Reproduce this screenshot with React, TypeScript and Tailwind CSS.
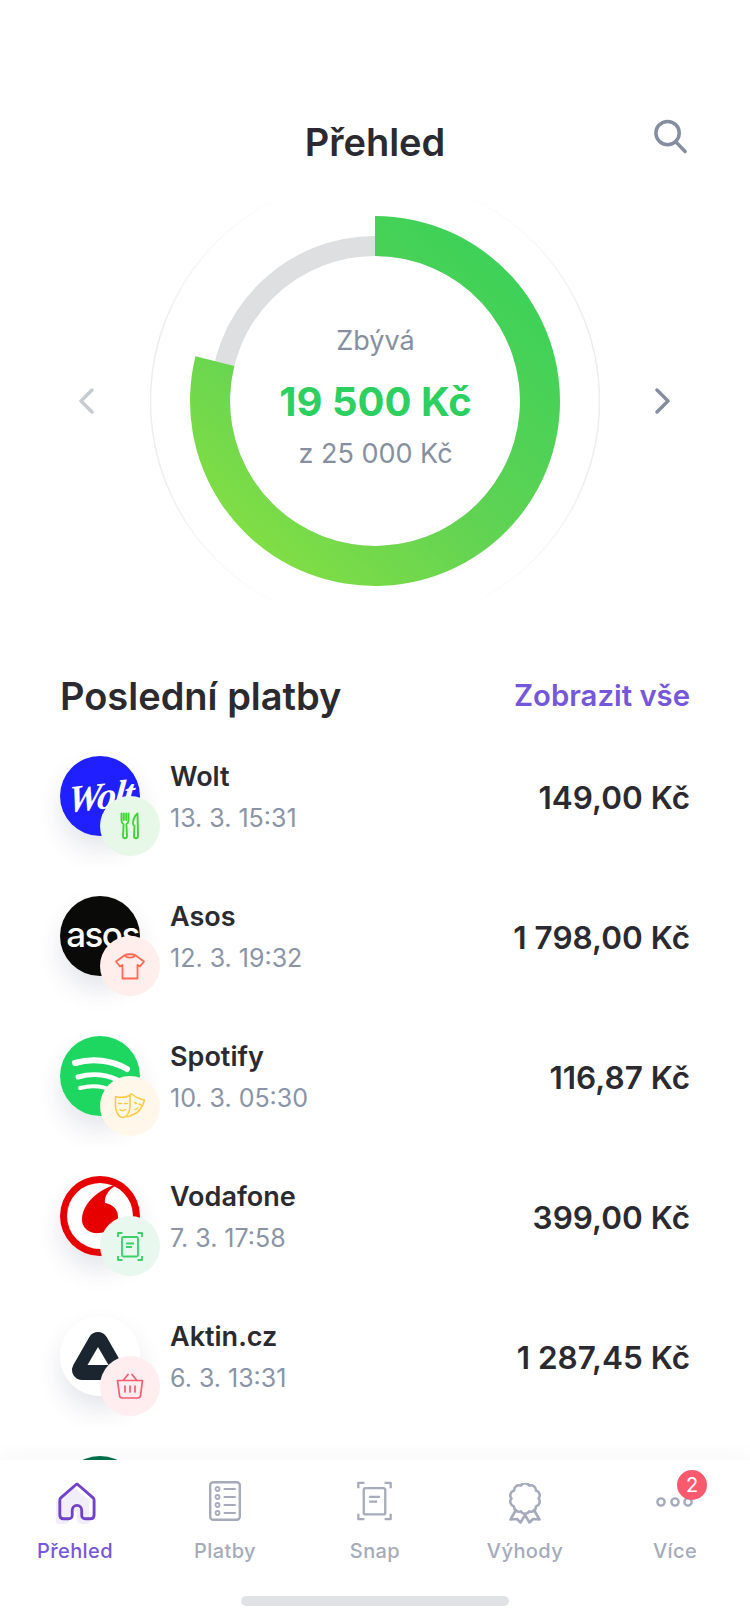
import React from 'react';

const polar = (r: number, deg: number) => {
  const a = ((deg - 90) * Math.PI) / 180;
  return `${225 + r * Math.cos(a)} ${225 + r * Math.sin(a)}`;
};

const scallop = (cx: number, cy: number, r: number, n: number) => {
  let d = '';
  for (let i = 0; i <= n; i++) {
    const a = (i * 2 * Math.PI) / n;
    const x = (cx + r * Math.cos(a)).toFixed(2);
    const y = (cy + r * Math.sin(a)).toFixed(2);
    d += i === 0 ? `M${x} ${y}` : ` A${r * 0.36} ${r * 0.36} 0 0 1 ${x} ${y}`;
  }
  return d + 'Z';
};

const Ring = () => (
  <svg width="450" height="450" viewBox="0 0 450 450" fill="none">
    <defs>
      <linearGradient id="ringGreen" x1="340" y1="90" x2="90" y2="380" gradientUnits="userSpaceOnUse">
        <stop offset="0" stopColor="#3FD158" />
        <stop offset="0.55" stopColor="#62D353" />
        <stop offset="1" stopColor="#84DF43" />
      </linearGradient>
      <linearGradient id="ringFade" x1="0" y1="0" x2="0" y2="450" gradientUnits="userSpaceOnUse">
        <stop offset="0.02" stopColor="#ECEDEF" stopOpacity="0" />
        <stop offset="0.35" stopColor="#ECEDEF" />
        <stop offset="0.65" stopColor="#ECEDEF" />
        <stop offset="0.98" stopColor="#ECEDEF" stopOpacity="0" />
      </linearGradient>
    </defs>
    <circle cx="225" cy="225" r="224.5" stroke="url(#ringFade)" strokeWidth="1.5" />
    <circle cx="225" cy="225" r="155" stroke="#DDDFE1" strokeWidth="20" />
    <path
      d={`M${polar(185, 0)} A185 185 0 1 1 ${polar(185, 284)} L${polar(145, 284)} A145 145 0 1 0 ${polar(145, 0)}Z`}
      fill="url(#ringGreen)"
    />
  </svg>
);

const Fork = () => (
  <svg width="20" height="28" viewBox="0 0 20 28" fill="none" stroke="#3FD43A" strokeWidth="1.9" strokeLinejoin="round" strokeLinecap="round">
    <path d="M1.5 1.5V8.5C1.5 10.5 2.5 11.5 3.6 12.3L3 24C3 27 7 27 7 24L6.4 12.3C7.5 11.5 8.5 10.5 8.5 8.5V1.5M3.8 1.5V8M6.2 1.5V8" />
    <path d="M17.5 1.5C14.5 4 13 8 13 11.5C13 12.8 13.8 13.5 14.5 14L14 24C14 27 18 27 18 24L17.5 1.5Z" />
  </svg>
);

const Shirt = () => (
  <svg width="32" height="27" viewBox="0 0 32 27" fill="none" stroke="#FF6A55" strokeWidth="1.8" strokeLinejoin="round">
    <path d="M11 2L2 8.5L6 13.5L8.5 12V25.5H23.5V12L26 13.5L30 8.5L21 2C20 5.5 12 5.5 11 2Z" />
    <path d="M11 2C12.5 1 19.5 1 21 2" />
  </svg>
);

const Masks = () => (
  <svg width="32" height="26" viewBox="0 0 32 26" fill="none" stroke="#FFCB47" strokeWidth="1.6" strokeLinecap="round" strokeLinejoin="round">
    <path d="M1.5 3.5C6 4.8 11 4.8 16 2.5V13C16 19 13 24 9 24.5C5 24.5 1.5 19 1.5 13V3.5Z" />
    <path d="M16 3C15.5 1 17.5 0.5 18.5 1.5C21 4 26 6 30.5 7C29 13 25 20 19 21.5C17.500 22.500 15.500 23.500 13.500 23.700" />
    <path d="M4.500 10.500H7.500M10.500 10.500H13.500M6 16.500C7.500 18 10 18 11.500 16.500M20.500 9.500L22.500 10.500M25 11L27 12M21 16.500C22.500 16.500 23.500 15.500 24 14.500" />
  </svg>
);

const SnapIcon = ({ color, w, h, sw }: { color: string; w: number; h: number; sw: number }) => (
  <svg width={w} height={h} viewBox="0 0 26 29" fill="none" stroke={color} strokeWidth={sw} strokeLinejoin="round">
    <path d="M5.500 1H1V5M20.500 1H25V5M1 24V28H5.500M25 24V28H20.500" />
    <rect x="5" y="5" width="16" height="19.500" rx="1.500" />
    <path d="M9 11.500H17M9 15H15" />
  </svg>
);

const Basket = () => (
  <svg width="28" height="26" viewBox="0 0 28 26" fill="none" stroke="#FA5B6E" strokeWidth="1.7" strokeLinecap="round" strokeLinejoin="round">
    <path d="M1.500 7.500H26.500L24.500 22.500C24.300 24 23.200 25 21.800 25H6.200C4.800 25 3.700 24 3.500 22.500L1.500 7.500Z" />
    <path d="M7.500 7L12 1.500M20.500 7L16 1.500M9 13V19M14 13V19M19 13V19" />
  </svg>
);

const WoltLogo = () => (
  <div className="w-20 h-20 rounded-full bg-[#1F1FFF] flex items-center justify-center overflow-hidden">
    <span className="text-white italic font-bold text-[38px] -rotate-6 -skew-x-12 tracking-[-1.5px] pl-[2px]" style={{ fontFamily: '"Liberation Serif", serif' }}>
      Wolt
    </span>
  </div>
);

const AsosLogo = () => (
  <div className="w-20 h-20 rounded-full bg-[#0A0A08] flex items-center justify-center overflow-hidden">
    <span className="text-white font-medium text-[35px] tracking-[-1.5px] mt-[-4px] pl-[5px]">asos</span>
  </div>
);

const SpotifyLogo = () => (
  <svg width="80" height="80" viewBox="0 0 80 80" className="block">
    <circle cx="40" cy="40" r="40" fill="#1ED760" />
    <g fill="none" stroke="#fff" strokeLinecap="round">
      <path d="M15 27C32 22 52 24 67 33" strokeWidth="6" />
      <path d="M18 41C32 37 48 38 61 46" strokeWidth="5" />
      <path d="M20 52C32 49 44 50 55 56" strokeWidth="4" />
    </g>
  </svg>
);

const VodafoneLogo = () => (
  <svg width="80" height="80" viewBox="0 0 80 80" className="block">
    <circle cx="40" cy="40" r="40" fill="#E60000" />
    <circle cx="40" cy="40" r="33" fill="#fff" />
    <path d="M58 8C42 12 24 24 22 42C21 53 31 58 39 57C50 56 58 50 58 41C58 32 51 28 45 27C44 20 49 13 58 8Z" fill="#E60000" />
  </svg>
);

const AktinLogo = () => (
  <svg width="80" height="80" viewBox="0 0 80 80" className="block">
    <circle cx="40" cy="40" r="40" fill="#fff" />
    <path d="M38 26L22 54H54Z" fill="#1B2530" stroke="#1B2530" strokeWidth="20" strokeLinejoin="round" />
    <path d="M38 31L27.500 49H48.500Z" fill="#fff" />
  </svg>
);

const payments = [
  { name: 'Wolt', date: '13. 3. 15:31', amount: '149,00 Kč', logo: <WoltLogo />, bg: 'bg-[#E8F8E8]', icon: <Fork /> },
  { name: 'Asos', date: '12. 3. 19:32', amount: '1 798,00 Kč', logo: <AsosLogo />, bg: 'bg-[#FFEEEB]', icon: <Shirt /> },
  { name: 'Spotify', date: '10. 3. 05:30', amount: '116,87 Kč', logo: <SpotifyLogo />, bg: 'bg-[#FFF8EA]', icon: <Masks /> },
  { name: 'Vodafone', date: '7. 3. 17:58', amount: '399,00 Kč', logo: <VodafoneLogo />, bg: 'bg-[#E8F8EE]', icon: <SnapIcon color="#3DD068" w={26} h={29} sw={1.900} /> },
  { name: 'Aktin.cz', date: '6. 3. 13:31', amount: '1 287,45 Kč', logo: <AktinLogo />, bg: 'bg-[#FFEDEF]', icon: <Basket /> },
];

const PaymentRow = ({ p }: { p: (typeof payments)[number] }) => (
  <div className="flex items-start h-[140px]">
    <div className="relative w-20 h-20 shrink-0 rounded-full shadow-[0_14px_26px_rgba(40,50,100,0.12)]">
      {p.logo}
      <div className={`absolute left-10 top-10 w-[60px] h-[60px] rounded-full flex items-center justify-center ${p.bg}`}>
        {p.icon}
      </div>
    </div>
    <div className="ml-[30px] h-20 pt-[2px] flex flex-col justify-center gap-[10px]">
      <div className="text-[27px] leading-[32px] font-semibold text-[#2A2A30]">{p.name}</div>
      <div className="text-[25px] leading-[30px] text-[#8A94A6]">{p.date}</div>
    </div>
    <div className="ml-auto h-20 pt-[3px] flex items-center text-[31.500px] font-semibold text-[#2A2A30]">{p.amount}</div>
  </div>
);

const tabGray = '#A5ABBA';

const HomeIcon = () => (
  <svg width="40" height="44" viewBox="0 0 42 46" fill="none">
    <path d="M0 21L18 5L35 19V41A3 3 0 0 1 32 44H27A5 5 0 0 1 22 39V34A4 4 0 0 0 14 34V39A5 5 0 0 1 9 44H3A3 3 0 0 1 0 41Z" fill="#F1EEFA" />
    <path d="M5 16.500L20.500 3C21.500 2 22.500 2 23.500 3L39 16.500C39.800 17.200 40 18 40 19V34.500C40 37 38.500 38.500 36 38.500H30.500C28.500 38.500 27 37 27 35V30C27 27 25 24.500 22 24.500C19 24.500 17 27 17 30V35C17 37 15.500 38.500 13.500 38.500H8C5.500 38.500 4 37 4 34.500V19C4 18 4.200 17.200 5 16.500Z" stroke="#7142C9" strokeWidth="3" strokeLinejoin="round" />
  </svg>
);

const ListIcon = () => (
  <svg width="32" height="40" viewBox="0 0 32 40" fill="none" stroke={tabGray} strokeWidth="2.400" strokeLinecap="round">
    <rect x="1.200" y="1.200" width="29.600" height="37.600" rx="3" />
    <circle cx="8.500" cy="8" r="2" strokeWidth="1.800" />
    <circle cx="8.500" cy="16" r="2" strokeWidth="1.800" />
    <circle cx="8.500" cy="24" r="2" strokeWidth="1.800" />
    <circle cx="8.500" cy="32" r="2" strokeWidth="1.800" />
    <path d="M15.500 8H26M15.500 16H26M15.500 24H26M15.500 32H26" strokeWidth="2" />
  </svg>
);

const AwardIcon = () => (
  <svg width="34" height="41" viewBox="0 0 34 41" fill="none" stroke={tabGray} strokeWidth="2.600" strokeLinejoin="round" strokeLinecap="round">
    <path d={scallop(17, 15.500, 13.500, 10)} />
    <path d="M8 27L2.500 36.500L9 36L12.500 39.500L17 32L21.500 39.500L25 36L31.500 36.500L26 27" />
  </svg>
);

const DotsIcon = () => (
  <svg width="44" height="12" viewBox="0 0 44 12" fill="none" stroke={tabGray} strokeWidth="2.400">
    <circle cx="8" cy="6" r="3.600" />
    <circle cx="22" cy="6" r="3.600" />
    <circle cx="35" cy="6" r="3.600" />
  </svg>
);

const tabs = [
  { label: 'Přehled', icon: <HomeIcon />, iconClass: 'mb-[-5px] ml-[1px]', active: true },
  { label: 'Platby', icon: <ListIcon />, iconClass: '' },
  { label: 'Snap', icon: <SnapIcon color={tabGray} w={35} h={40} sw={1.700} />, iconClass: '-ml-[1px]' },
  { label: 'Výhody', icon: <AwardIcon />, iconClass: 'mb-[-3px]' },
  { label: 'Více', icon: <DotsIcon />, iconClass: 'mb-[13px]' },
];

export default function App() {
  return (
    <div className="w-[750px] h-[1624px] flex flex-col bg-white overflow-hidden" style={{ fontFamily: 'Inter, sans-serif' }}>
      <main className="flex-1 min-h-0 overflow-hidden">
        {/* Header */}
        <header className="relative pt-[116px]">
          <h1 className="text-center text-[38px] leading-[52px] font-semibold text-[#2A2A30]">Přehled</h1>
          <svg className="absolute left-[653px] top-[119px]" width="35" height="35" viewBox="0 0 36 36" fill="none" stroke="#858E9E" strokeWidth="3.600" strokeLinecap="round">
            <circle cx="15" cy="14.500" r="12" />
            <path d="M23.500 23.500L33 33.500" />
          </svg>
        </header>

        {/* Budget ring */}
        <section className="mt-2 flex items-center justify-between pl-[78px] pr-[79px]">
          <svg width="17" height="26" viewBox="0 0 17 26" fill="none" stroke="#C6CBD1" strokeWidth="3.400" strokeLinecap="round" strokeLinejoin="round">
            <path d="M14 2L3 13L14 24" />
          </svg>
          <div className="relative w-[450px] h-[450px]">
            <Ring />
            <div className="absolute inset-0 flex flex-col items-center pl-[2px]">
              <div className="mt-[144px] text-[27px] leading-[42px] text-[#868FA0]">Zbývá</div>
              <div className="mt-[15px] text-[40px] leading-[50px] font-bold text-[#2CCF60]">19 500 Kč</div>
              <div className="mt-[6px] text-[27px] leading-[42px] text-[#868FA0]">z 25 000 Kč</div>
            </div>
          </div>
          <svg width="17" height="26" viewBox="0 0 17 26" fill="none" stroke="#858E9E" strokeWidth="3.400" strokeLinecap="round" strokeLinejoin="round">
            <path d="M3 2L14 13L3 24" />
          </svg>
        </section>

        {/* Payments */}
        <section className="mt-[47px] px-[60px]">
          <div className="flex items-center justify-between h-[46px] mb-[37px]">
            <h2 className="text-[38px] font-semibold text-[#2A2A30]">Poslední platby</h2>
            <a className="text-[29.300px] font-semibold text-[#7457DA]">Zobrazit vše</a>
          </div>
          {payments.map((p) => (
            <PaymentRow key={p.name} p={p} />
          ))}
          <div className="w-20 h-20 rounded-full bg-[#00704A]" />
        </section>
      </main>

      {/* Tab bar */}
      <nav className="relative z-10 h-[164px] shrink-0 bg-white shadow-[0_-10px_20px_rgba(0,0,0,0.025)]">
        <div className="grid grid-cols-5">
          {tabs.map((t) => (
            <div key={t.label} className="relative flex flex-col items-center">
              <div className="h-[79px] w-full flex items-end justify-center pb-[18px]">
                <div className={t.iconClass}>{t.icon}</div>
              </div>
              <span className={`text-[20px] leading-[24px] font-medium tracking-[0.4px] ${t.active ? 'text-[#7457DA]' : 'text-[#A5ABBA]'}`}>
                {t.label}
              </span>
              {t.label === 'Více' && (
                <span className="absolute left-[77px] top-[10px] w-[30px] h-[30px] rounded-full bg-[#FA5A6E] text-white text-[20px] leading-[30px] text-center">
                  2
                </span>
              )}
            </div>
          ))}
        </div>
        <div className="absolute left-[241px] top-[136px] w-[268px] h-[10px] rounded-full bg-[#E0E2E6]" />
      </nav>
    </div>
  );
}
